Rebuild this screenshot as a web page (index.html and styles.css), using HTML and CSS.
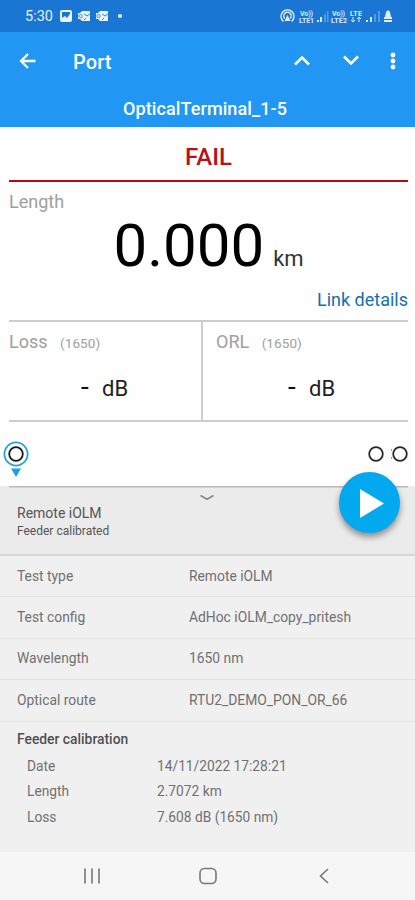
FILE: index.html
```html
<!DOCTYPE html>
<html lang="en">
<head>
<meta charset="utf-8">
<title>Port</title>
<link rel="stylesheet" href="styles.css">
</head>
<body>
<div class="status">
  <span class="clock">5:30</span>
  <svg class="notifications" width="66" height="14" viewBox="0 0 66 14" fill="#eaf4ff">
    <path fill-rule="evenodd" d="M2 1h8q2 0 2 2v8q0 2-2 2H2q-2 0-2-2V3q0-2 2-2zM2 3v6l3-2 2 2 3-4V3z"/>
    <g id="mail"><path d="M22 2h8v10h-8l-2-2h-2V4h2z"/><circle cx="20.500" cy="7" r="1.700" fill="none" stroke="#1976d2" stroke-width=".8"/><path d="M24 5l3 2 3-2M24 11l2-2" fill="none" stroke="#1976d2" stroke-width=".9"/></g>
    <use href="#mail" x="18"/>
    <circle cx="60" cy="7" r="2"/>
  </svg>
  <svg class="signals" width="114" height="16" viewBox="0 0 114 16" fill="#dcecff">
    <g fill="none" stroke="#eaf4ff" stroke-width="1.4"><path d="M3.500 13.500a6.500 6.500 0 1 1 8 0"/><path d="M4.800 10.500a3.700 3.700 0 1 1 5.400 0"/></g><path d="M7.500 7l3 6h-6z"/>
    <g class="carrier"><text x="20" y="7.500" textLength="13">Vo))</text><text x="19" y="15" textLength="15">LTE1</text><text x="52" y="7.500" textLength="13">Vo))</text><text x="51" y="15" textLength="16">LTE2</text><text x="70" y="7.500" textLength="12">LTE</text></g>
    <path d="M37 12h2v2h-2zM40 9h2v5h-2zM86 12h2v2h-2zM90 9h2v5h-2z"/>
    <path d="M44 6h2v8h-2zM47 3h1.500v11H47zM94 6h2v8h-2zM98 3h2v11h-2z" opacity=".3"/>
    <path d="M73 9v5m-2-2l2 2 2-2M79 14V9m-2 2l2-2 2 2" stroke="#dcecff" fill="none"/>
    <path d="M106 4l2-2 2 2 1 5h1v2h-8V9h1zM104 12h8v2h-8z"/>
  </svg>
</div>
<header>
  <div class="toolbar">
    <svg width="18" height="18" viewBox="0 0 18 18"><path class="stroke" d="M16.500 9H2M9 2L2 9l7 7"/></svg>
    <h1>Port</h1>
    <svg class="up" width="18" height="18" viewBox="0 0 18 18"><path class="stroke thick" d="M2 12.500l7-7 7 7"/></svg>
    <svg class="down" width="18" height="18" viewBox="0 0 18 18"><path class="stroke thick" d="M2 4.500l7 7 7-7"/></svg>
    <svg width="6" height="18" viewBox="0 0 6 18" fill="#fff"><circle cx="3" cy="3" r="2.400"/><circle cx="3" cy="9" r="2.400"/><circle cx="3" cy="15" r="2.400"/></svg>
  </div>
  <div class="device">OpticalTerminal_1-5</div>
</header>
<main>
  <div class="verdict">FAIL</div>
  <section class="length">
    <div class="label">Length</div>
    <div class="reading"><span class="number">0.000</span><span class="unit">km</span></div>
    <a class="details">Link details</a>
  </section>
  <section class="metrics">
    <div class="metric"><div class="label">Loss <small>(1650)</small></div><div class="value"><b>-</b>dB</div></div>
    <div class="metric"><div class="label">ORL <small>(1650)</small></div><div class="value"><b>-</b>dB</div></div>
  </section>
  <section class="track">
    <svg width="28" height="38" viewBox="0 0 28 38"><circle cx="13" cy="13" r="11.600" fill="none" stroke="#29a3dc" stroke-width="1.800"/><circle cx="13" cy="13" r="6.800" fill="none" stroke="#181818" stroke-width="1.800"/><path d="M8 27.500h10l-5 8.500z" fill="#1ca0df"/></svg>
    <svg class="ends" width="42" height="18" viewBox="0 0 42 18" fill="none" stroke="#282828" stroke-width="1.800"><circle cx="9" cy="9" r="6.800"/><circle cx="33" cy="9" r="6.800"/><path d="M24.500 4v2M24.500 12v2" stroke="#999" stroke-width="1"/></svg>
  </section>
</main>
<section class="sheet">
  <div class="summary">
    <svg class="collapse" width="16" height="8" viewBox="0 0 16 8"><path d="M1.500 1.500L8 5.300l6.500-3.800" fill="none" stroke="#888" stroke-width="1.700"/></svg>
    <div class="name">Remote iOLM</div>
    <div class="state">Feeder calibrated</div>
    <button class="play" aria-label="Start"><svg width="60" height="60" viewBox="0 0 60 60"><path d="M21 16l24 14.500L21 45z" fill="#fff"/></svg></button>
  </div>
  <dl class="rows">
    <div><dt>Test type</dt><dd>Remote iOLM</dd></div>
    <div><dt>Test config</dt><dd>AdHoc iOLM_copy_pritesh</dd></div>
    <div><dt>Wavelength</dt><dd>1650 nm</dd></div>
    <div><dt>Optical route</dt><dd>RTU2_DEMO_PON_OR_66</dd></div>
  </dl>
  <h2>Feeder calibration</h2>
  <dl class="calibration">
    <div><dt>Date</dt><dd>14/11/2022 17:28:21</dd></div>
    <div><dt>Length</dt><dd>2.7072 km</dd></div>
    <div><dt>Loss</dt><dd>7.608 dB (1650 nm)</dd></div>
  </dl>
</section>
<nav>
  <svg width="18" height="18" viewBox="0 0 18 18"><path d="M2 1.500v15M9 1.500v15M16 1.500v15"/></svg>
  <svg width="18" height="18" viewBox="0 0 18 18"><rect x="1" y="1.500" width="16" height="15" rx="4.500"/></svg>
  <svg width="18" height="18" viewBox="0 0 18 18"><path d="M13 2L5.500 9l7.500 7"/></svg>
</nav>
</body>
</html>
```
FILE: styles.css
```css
* { box-sizing: border-box; margin: 0; }
body { width: 415px; height: 900px; overflow: hidden; background: #fefefe; font-family: Roboto, sans-serif; display: flex; flex-direction: column; }
svg { display: block; flex: none; }

.status { height: 32px; background: #1976d2; display: flex; align-items: center; padding: 0 21px 0 25px; color: #e3f1ff; }
.clock { font-size: 14.500px; width: 35px; }
.signals { margin-left: auto; }
.carrier { font-size: 7px; font-weight: 700; }

header { height: 95px; background: #2196f3; color: #fff; }
.toolbar { height: 58px; display: flex; align-items: center; padding: 0 19px; }
h1 { font-size: 20px; font-weight: 500; letter-spacing: .1px; margin-left: 36px; line-height: 24px; padding-top: 1px; }
.up { margin-left: auto; }
.down { margin: 0 30px 0 31px; }
.stroke { fill: none; stroke: #fff; stroke-width: 2.300; }
.thick { stroke-width: 2.600; }
.device { padding-top: 8px; text-align: center; font-size: 18px; line-height: 22px; font-weight: 500; padding-right: 5px; letter-spacing: .1px; }

main { height: 359px; padding: 0 7px 0 9px; }
.verdict { height: 55px; border-bottom: 2px solid #b40a14; color: #b91019; font-size: 24px; line-height: 61px; font-weight: 500; text-align: center; }
.length { height: 138px; display: flex; flex-direction: column; }
.label { color: #a0a0a0; font-size: 18px; line-height: 22px; }
.length .label { margin-top: 9px; }
.reading { display: flex; align-items: baseline; padding-left: 104.500px; height: 76px; line-height: 66px; color: #000; }
.number { font-size: 60px; }
.unit { font-size: 22px; color: #333; margin-left: 9px; }
.details { color: #176fae; font-size: 18px; line-height: 22px; align-self: flex-end; }
.metrics { height: 102px; border: solid #cdcdcd; border-width: 2px 0; display: grid; grid-template-columns: 192px 1fr; }
.metric { padding-top: 9px; }
.metric + .metric { border-left: 2px solid #cdcdcd; padding-left: 13px; }
small { font-size: 13.500px; letter-spacing: .1px; margin-left: 8px; }
.value { display: flex; align-items: baseline; margin-top: 18px; padding-left: 72px; font-size: 22px; line-height: 30px; color: #222; }
.value b { font-size: 28px; font-weight: 400; width: 21px; color: #111; }
.track { display: flex; justify-content: space-between; padding-top: 19px; margin: 0 -1px 0 -6px; }
.ends { margin-top: 4px; }

.sheet { height: 366px; background: #f0f0f0; color: #707070; }
.summary { position: relative; height: 70px; padding: 18px 17px 0; background: #ebebeb; border-bottom: 2px solid #d8d8d8; color: #555; background-image: linear-gradient(#b9b9b9, #b9b9b9); background-size: 399px 1.500px; background-position: 9px 0; background-repeat: no-repeat; }
.collapse { position: absolute; left: 199px; top: 8px; }
.name { font-size: 14px; line-height: 19px; }
.state { font-size: 12px; line-height: 16px; }
.play { position: absolute; left: 339px; top: -14px; width: 61px; height: 61px; padding: 0; border: 0; border-radius: 50%; background: #03a9ee; box-shadow: 0 4px 6px rgba(0,0,0,.4); }
.rows > div { height: 41.400px; border-bottom: 1.500px solid #e2e2e2; display: grid; grid-template-columns: 172px 1fr; align-items: center; padding: 0 0 1px 17px; font-size: 13.850px; }
dd { margin: 0; }
h2 { font-size: 13.850px; font-weight: 500; line-height: 20px; color: #505050; padding: 7px 17px 5px; }
.calibration > div { display: grid; grid-template-columns: 130px 1fr; padding-left: 27px; font-size: 13.750px; line-height: 25.500px; }

nav { height: 48px; background: #f6f6f6; display: flex; justify-content: space-between; align-items: center; padding: 0 82px 0 83px; }
nav svg { fill: none; stroke: #777; stroke-width: 1.600; }
```
